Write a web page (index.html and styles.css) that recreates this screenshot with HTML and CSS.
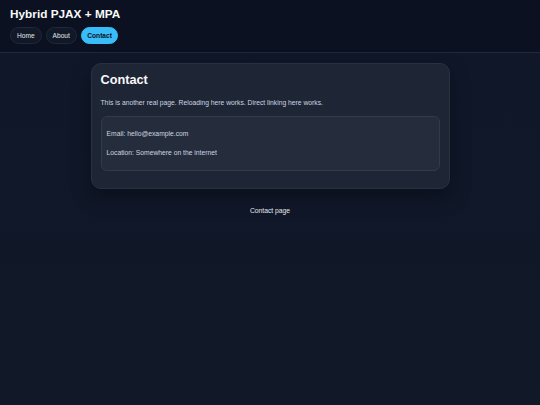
FILE: index.html
```html
<!DOCTYPE html>
<html lang="en">
<head>
<meta charset="utf-8">
<title>Contact</title>
<link rel="stylesheet" href="styles.css">
</head>
<body>
<header class="site-header">
  <h1 class="site-title">Hybrid PJAX + MPA</h1>
  <nav class="nav">
    <a class="pill" href="#">Home</a>
    <a class="pill" href="#">About</a>
    <a class="pill active" href="#">Contact</a>
  </nav>
</header>
<main class="main">
  <section class="card">
    <h2 class="card-title">Contact</h2>
    <p class="lead">This is another real page. Reloading here works. Direct linking here works.</p>
    <div class="info">
      <p>Email: hello@example.com</p>
      <p>Location: Somewhere on the internet</p>
    </div>
  </section>
  <footer class="footer">Contact page</footer>
</main>
</body>
</html>
```
FILE: styles.css
```css
* { box-sizing: border-box; }
html, body { margin: 0; height: 100%; }
body {
  font-family: "Liberation Sans", Arial, sans-serif;
  background: linear-gradient(180deg, #0f172a 0%, #111827 100%);
  color: #e5e7eb;
}
.site-header {
  background: #0b1120;
  border-bottom: 1px solid #1e293b;
  padding: 7px 10px 8px;
}
.site-title {
  margin: 0 0 6px;
  font-size: 11.8px;
  font-weight: bold;
  color: #f8fafc;
  line-height: 14px;
}
.nav { display: flex; gap: 4px; }
.pill {
  display: inline-flex;
  align-items: center;
  height: 17px;
  padding: 0 6px;
  border-radius: 9px;
  border: 1px solid #1f2937;
  background: #111827;
  color: #e5e7eb;
  font-size: 6.6px;
  text-decoration: none;
}
.pill.active {
  background: #38bdf8;
  border-color: #38bdf8;
  color: #0b1120;
  font-weight: bold;
  padding: 0 5.5px;
}
.main {
  display: flex;
  flex-direction: column;
  align-items: center;
  padding-top: 10px;
}
.card {
  width: 359px;
  background: #1e2535;
  border: 1px solid #283142;
  border-radius: 10px;
  padding: 9px 9px 17px;
  box-shadow: 0 8px 20px rgba(0,0,0,0.35);
}
.card-title {
  margin: 0 0 10px;
  font-size: 12.7px;
  line-height: 15px;
  color: #f8fafc;
}
.lead {
  margin: 0 0 8px;
  font-size: 6.75px;
  line-height: 10px;
  color: #cbd5e1;
}
.info {
  background: #252d3c;
  border: 1px solid #323b4b;
  border-radius: 6px;
  padding: 12px 5px;
}
.info p {
  margin: 0;
  font-size: 6.75px;
  line-height: 10px;
  color: #cbd5e1;
}
.info p + p { margin-top: 8.5px; }
.footer {
  margin-top: 18px;
  font-size: 6.75px;
  color: #e5e7eb;
}
```
